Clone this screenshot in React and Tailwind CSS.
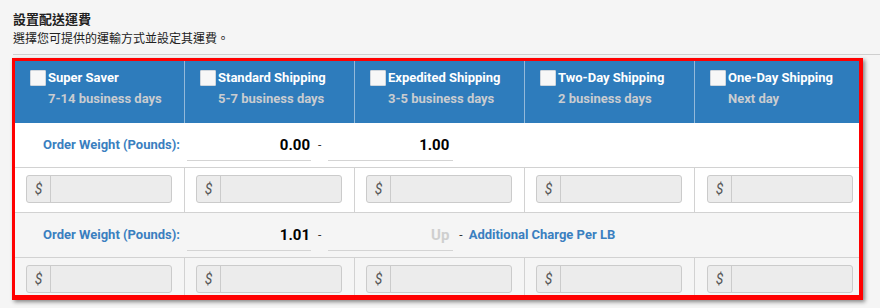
import React from 'react'

const methods = [
  { name: 'Super Saver', days: '7-14 business days' },
  { name: 'Standard Shipping', days: '5-7 business days' },
  { name: 'Expedited Shipping', days: '3-5 business days' },
  { name: 'Two-Day Shipping', days: '2 business days' },
  { name: 'One-Day Shipping', days: 'Next day' },
]

const cols = 'grid grid-cols-[170px_170px_170px_170px_1fr]'

function PriceInput() {
  return (
    <div className="flex h-[28px] w-[146px] rounded-[3px] border border-[#cbcbcb] bg-[#ececec]">
      <span className="flex w-[24px] items-center justify-center border-r border-[#cbcbcb] text-[14px] italic text-[#555]">
        $
      </span>
      <input className="min-w-0 flex-1 bg-transparent outline-none" />
    </div>
  )
}

function PriceRow({ bg, h, last }) {
  return (
    <div className={`${cols} ${bg} ${h} ${last ? '' : 'border-b border-[#d2d2d2]'} overflow-hidden`}>
      {methods.map((m, i) => (
        <div
          key={m.name}
          className={`pt-[7px] ${i === 4 ? 'pl-[12px]' : 'pl-[11px] border-r border-[#d2d2d2]'}`}
        >
          <PriceInput />
        </div>
      ))}
    </div>
  )
}

function WeightRow({ from, to, up, bg }) {
  return (
    <div className={`flex h-[45px] items-center border-b border-[#d2d2d2] ${bg}`}>
      <div className="w-[169px] pr-[4px] text-right text-[13px] font-bold text-[#3a7fc0]">
        Order Weight (Pounds):
      </div>
      <div className="ml-[3px] mt-[2px] flex h-[30px] w-[124px] items-center justify-end border-b border-[#d4d4d4] pr-[1px] text-[15px] font-bold text-black">
        {from}
      </div>
      <span className="mx-[7px] text-[12px] text-[#333]">-</span>
      <div
        className={`mt-[2px] flex h-[30px] w-[125px] items-center justify-end border-b border-[#d4d4d4] pr-[4px] text-[15px] font-bold ${
          up ? 'text-[#cfcfcf]' : 'text-black'
        }`}
      >
        {to}
      </div>
      {up && (
        <>
          <span className="mx-[6px] text-[12px] text-[#333]">-</span>
          <span className="text-[13px] font-bold text-[#3a7fc0]">Additional Charge Per LB</span>
        </>
      )}
    </div>
  )
}

export default function App() {
  return (
    <div className="min-h-screen bg-[#f5f5f5] font-['Roboto','Noto_Sans_CJK_TC',sans-serif]">
      <div className="ml-[13px] border-b border-[#cfcfcf] pt-[10px] pb-[7px]">
        <h1 className="text-[13px] font-bold leading-[18px] text-[#222] font-['Noto_Sans_CJK_TC',sans-serif]">
          設置配送運費
        </h1>
        <p className="mt-[1px] text-[12px] leading-[18px] text-[#222] font-['Noto_Sans_CJK_TC',sans-serif]">
          選擇您可提供的運輸方式並設定其運費。
        </p>
      </div>

      <div className="ml-[12px] mt-[3px] w-[851px] border-[3px] border-r-[4px] border-b-[5px] border-[#ff0000] shadow-[2px_2px_4px_rgba(0,0,0,0.45)]">
        <div className={`${cols} h-[62px] bg-[#2e7cbc]`}>
          {methods.map((m, i) => (
            <div
              key={m.name}
              className={`pl-[15px] pt-[9px] ${i < 4 ? 'border-r border-[#93b9da]' : ''}`}
            >
              <div className="flex items-center gap-[2px]">
                <span className="h-[16px] w-[16px] rounded-[1px] border border-[#cfd6dd] bg-[#f7f7f7]" />
                <span className="text-[13px] font-bold leading-[16px] text-white">{m.name}</span>
              </div>
              <div className="mt-[5px] pl-[18px] text-[13px] font-bold leading-[16px] text-[#c9ccd0]">
                {m.days}
              </div>
            </div>
          ))}
        </div>

        <WeightRow from="0.00" to="1.00" bg="bg-white" />
        <PriceRow bg="bg-white" h="h-[45px]" />
        <WeightRow from="1.01" to="Up" up bg="bg-[#f5f5f5]" />
        <PriceRow bg="bg-[#f5f5f5]" h="h-[37px]" last />
      </div>
    </div>
  )
}
